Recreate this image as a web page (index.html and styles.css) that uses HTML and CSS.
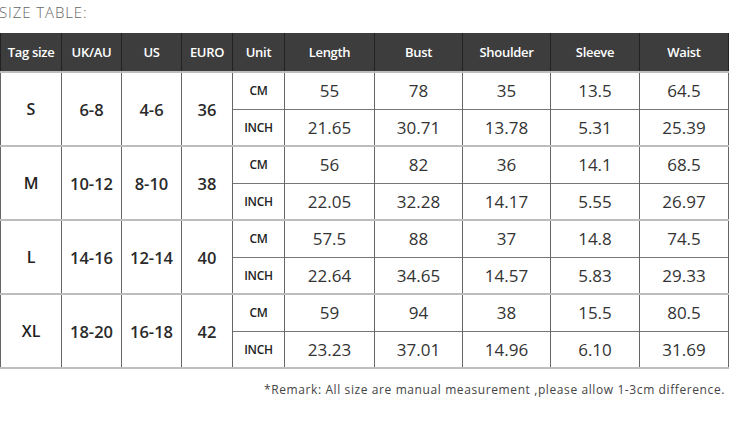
FILE: index.html
```html
<!DOCTYPE html>
<html>
<head>
<meta charset="utf-8">
<link rel="stylesheet" href="styles.css">
</head>
<body>
<div class="page">
  <div class="title">SIZE TABLE:</div>
  <table class="sizes">
    <colgroup>
      <col class="c61"><col class="c60"><col class="c60"><col class="c51"><col class="c52">
      <col class="c90"><col class="c88"><col class="c88"><col class="c89"><col class="c89">
    </colgroup>
    <thead>
      <tr>
        <th>Tag size</th><th>UK/AU</th><th>US</th><th>EURO</th><th>Unit</th>
        <th>Length</th><th>Bust</th><th>Shoulder</th><th>Sleeve</th><th>Waist</th>
      </tr>
    </thead>
    <tbody>
      <tr class="cm">
        <td rowspan="2" class="tag">S</td><td rowspan="2" class="rng">6-8</td><td rowspan="2" class="rng">4-6</td><td rowspan="2" class="rng">36</td>
        <td class="unit">CM</td><td>55</td><td>78</td><td>35</td><td>13.5</td><td>64.5</td>
      </tr>
      <tr class="inch">
        <td class="unit">INCH</td><td>21.65</td><td>30.71</td><td>13.78</td><td>5.31</td><td>25.39</td>
      </tr>
      <tr class="cm">
        <td rowspan="2" class="tag">M</td><td rowspan="2" class="rng">10-12</td><td rowspan="2" class="rng">8-10</td><td rowspan="2" class="rng">38</td>
        <td class="unit">CM</td><td>56</td><td>82</td><td>36</td><td>14.1</td><td>68.5</td>
      </tr>
      <tr class="inch">
        <td class="unit">INCH</td><td>22.05</td><td>32.28</td><td>14.17</td><td>5.55</td><td>26.97</td>
      </tr>
      <tr class="cm">
        <td rowspan="2" class="tag">L</td><td rowspan="2" class="rng">14-16</td><td rowspan="2" class="rng">12-14</td><td rowspan="2" class="rng">40</td>
        <td class="unit">CM</td><td>57.5</td><td>88</td><td>37</td><td>14.8</td><td>74.5</td>
      </tr>
      <tr class="inch">
        <td class="unit">INCH</td><td>22.64</td><td>34.65</td><td>14.57</td><td>5.83</td><td>29.33</td>
      </tr>
      <tr class="cm">
        <td rowspan="2" class="tag">XL</td><td rowspan="2" class="rng">18-20</td><td rowspan="2" class="rng">16-18</td><td rowspan="2" class="rng">42</td>
        <td class="unit">CM</td><td>59</td><td>94</td><td>38</td><td>15.5</td><td>80.5</td>
      </tr>
      <tr class="inch">
        <td class="unit">INCH</td><td>23.23</td><td>37.01</td><td>14.96</td><td>6.10</td><td>31.69</td>
      </tr>
    </tbody>
  </table>
  <div class="remark">*Remark: All size are manual measurement ,please allow 1-3cm difference.</div>
</div>
</body>
</html>
```
FILE: styles.css
```css
html, body {
  margin: 0;
  padding: 0;
  background: #ffffff;
}
.page {
  width: 731px;
  font-family: "Open Sans", "Lato", sans-serif;
}
.title {
  height: 33px;
  box-sizing: border-box;
  padding-top: 2px;
  margin-left: -1px;
  font-size: 15px;
  font-weight: 300;
  color: #666;
  letter-spacing: 0.9px;
}
.sizes {
  border-collapse: collapse;
  table-layout: fixed;
  width: 729px;
}
.c61 { width: 61px; }
.c60 { width: 60px; }
.c51 { width: 51px; }
.c52 { width: 52px; }
.c90 { width: 90px; }
.c88 { width: 88px; }
.c89 { width: 89px; }
.sizes th {
  height: 38px;
  padding: 0;
  background: #3d3d3d;
  color: #fff;
  font-size: 13px;
  font-weight: 600;
  text-align: center;
  border-left: 1px solid #222;
  border-right: 1px solid #222;
  letter-spacing: -0.3px;
}
.sizes tbody tr {
  height: 37px;
}
.sizes td {
  padding: 0;
  text-align: center;
  border-left: 1px solid #666;
  border-right: 1px solid #666;
  color: #333;
  font-size: 17px;
  font-weight: 400;
}
.sizes tr.cm td {
  border-top: 2px solid #bdbdbd;
}
.sizes tr.inch td {
  border-top: 1px solid #777;
}
.sizes tbody tr:last-child td,
.sizes td.tag, .sizes td.rng {
  border-bottom: 2px solid #bdbdbd;
}
.sizes td.tag {
  font-size: 16px;
  font-weight: 600;
  color: #222;
}
.sizes td.rng {
  font-size: 16.5px;
  font-weight: 600;
  color: #2a2a2a;
}
.sizes td.unit {
  font-size: 12px;
  font-weight: 600;
  color: #222;
  letter-spacing: -0.3px;
}
.remark {
  margin-top: 12px;
  padding-right: 6px;
  text-align: right;
  font-size: 12px;
  color: #444;
  letter-spacing: 0.6px;
}
```
